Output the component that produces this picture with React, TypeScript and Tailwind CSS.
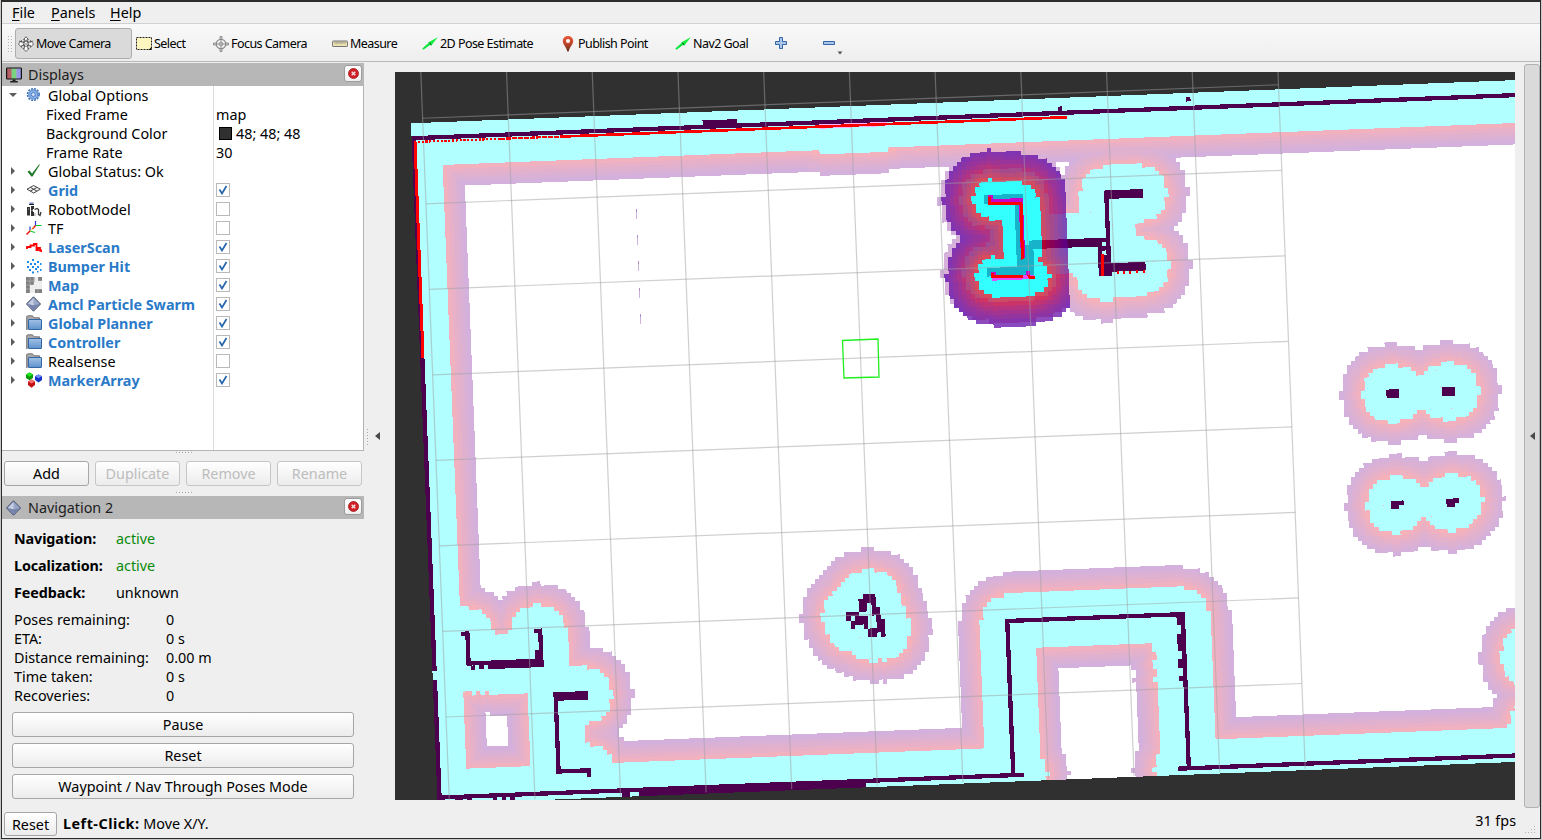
import React from "react";

/* ---------- occupancy map model ---------- */

const CELL = 4.285;
const COLS = 272;
const ROWS = 159;
const ORIGIN_X = 411;
const ORIGIN_Y = 123.3;
const ANGLE = -2.24;
const SIN = 0.03996;
const COS = 0.9992;

// [x, y, columns, rows]: centre of the first cell, then the extent in cells
type Block = [number, number, number, number];

const WALLS: Block[] = [
  [413, 138.4, 271, 1], [704, 122.6, 8, 1], [1059.5, 108, 1, 1], [1188, 99, 1, 1],
  [413, 138.4, 1, 125], [434.8, 684, 1, 28],
  [440, 796.5, 137, 1], [1180, 767.6, 98, 1],
  [457, 800, 2, 1], [470, 799.6, 1, 1], [495, 798.6, 1, 1], [504, 798.2, 1, 1], [512, 797.8, 1, 1],
  [623, 793, 2, 1], [641, 792.4, 53, 1],
  [463, 633, 2, 1], [468, 637, 1, 6], [468, 663.6, 18, 1], [490, 666.8, 12, 1], [473, 667.4, 1, 1], [482, 667, 1, 1],
  [536, 630.5, 2, 1], [540, 635, 1, 7], [536.5, 652, 1, 3], [542, 664.5, 1, 1],
  [555.5, 694.8, 8, 2], [556.4, 702, 1, 16], [558.8, 770.6, 8, 1], [588.6, 769.8, 1, 2],
  [864, 596.5, 3, 2], [860, 601, 2, 3], [848, 614, 3, 1], [848, 618, 1, 1], [852.5, 622, 1, 2], [857, 616, 3, 2],
  [865, 624.5, 1, 1], [873.5, 603.5, 1, 2], [873.5, 610, 2, 2], [877.5, 617, 1, 2], [878, 623, 2, 3], [883, 634, 1, 1], [870.5, 630, 2, 2],
  [1007, 620.5, 42, 1], [1007, 625, 1, 36], [1182.5, 617, 1, 36], [1178.5, 617, 1, 2], [1179, 635, 1, 4], [1180.6, 660, 1, 2], [1181, 678, 1, 1],
  [1388, 391.4, 3, 2], [1443, 389.4, 3, 2], [1392.4, 503, 3, 1], [1392.4, 507, 2, 1], [1448, 500.4, 3, 1], [1448, 504.8, 2, 1],
  [1527, 650, 3, 3], [1533, 724, 3, 10],
  [986, 197.5, 9, 2], [1016, 206, 2, 15], [1026, 247, 2, 7], [1030.5, 242, 3, 2], [989, 270, 11, 2],
  [1043, 242, 14, 2], [1106.5, 192, 9, 2], [1106.5, 200, 1, 10], [1103.5, 240, 1, 1], [1103.5, 248, 1, 1],
  [1103.8, 257, 1, 5], [1099, 249, 1, 7], [1107.6, 240, 1, 9], [1111.8, 265, 8, 2],
];

const SENSED: Block[] = [[821, 127, 16, 1]];

const LOCAL: Block[] = [
  [989, 198, 1, 2], [993, 202, 7, 1], [1020.5, 201, 1, 14], [992, 275, 1, 1], [992, 279, 9, 1], [1027, 273, 1, 2], [1030, 277.5, 2, 1],
];

function rasterize(blocks: Block[]): Uint8Array {
  const cells = new Uint8Array(COLS * ROWS);
  blocks.forEach(([x, y, w, h]) => {
    const dx = x - ORIGIN_X;
    const dy = y - 123.4;
    const c0 = Math.floor((dx * COS - dy * SIN) / CELL);
    const r0 = Math.floor((dx * SIN + dy * COS) / CELL);
    for (let r = Math.max(0, r0); r < Math.min(ROWS, r0 + h); r++)
      for (let c = Math.max(0, c0); c < Math.min(COLS, c0 + w); c++) cells[r * COLS + c] = 1;
  });
  return cells;
}

function distances(cells: Uint8Array): Float32Array {
  const out = new Float32Array(COLS * ROWS).fill(99);
  for (let r = 0; r < ROWS; r++)
    for (let c = 0; c < COLS; c++) {
      if (!cells[r * COLS + c]) continue;
      for (let y = -11; y <= 11; y++)
        for (let x = -11; x <= 11; x++) {
          const rr = r + y;
          const cc = c + x;
          if (rr < 0 || cc < 0 || rr >= ROWS || cc >= COLS) continue;
          const d = Math.sqrt(x * x + y * y);
          const i = rr * COLS + cc;
          if (d < out[i]) out[i] = d;
        }
    }
  return out;
}

function regionPath(inside: (i: number) => boolean, maxCol = COLS): string {
  let d = "";
  const n = (v: number) => (v * CELL).toFixed(2);
  for (let r = 0; r < ROWS; r++) {
    let start = -1;
    for (let c = 0; c <= maxCol; c++) {
      const on = c < maxCol && inside(r * COLS + c);
      if (on && start < 0) start = c;
      if (!on && start >= 0) {
        d += `M${n(start)} ${n(r)}H${n(c)}V${n(r + 1)}H${n(start)}Z`;
        start = -1;
      }
    }
  }
  return d;
}

function costColor(t: number, inscribed: number, decay: number): string {
  const c = Math.min(1, 0.98 * Math.exp(-decay * (t - inscribed)));
  return `rgb(${Math.round(255 * c)},0,${Math.round(255 * (1 - c))})`;
}

interface Layer { fill: string; d: string }

function costLayers(cells: Uint8Array, inscribed: number, decay: number, maxCol = COLS): Layer[] {
  const dist = distances(cells);
  const layers: Layer[] = [];
  for (let t = 11; t > inscribed; t -= 0.5)
    layers.push({ fill: costColor(t, inscribed, decay), d: regionPath((i) => dist[i] <= t, maxCol) });
  layers.push({ fill: "#00ffff", d: regionPath((i) => dist[i] <= inscribed, maxCol) });
  layers.push({ fill: "#ff00ff", d: regionPath((i) => dist[i] === 0, maxCol) });
  return layers;
}

const wallCells = rasterize(WALLS);
const wallPath = regionPath((i) => wallCells[i] === 1);
const globalLayers = costLayers(rasterize([...WALLS, ...SENSED]), 6, 0.16);
const localLayers = costLayers(rasterize(LOCAL), 4, 0.147, 152);

function Viewport() {
  const cols = Array.from({ length: 11 }, (_, i) => 11.8 + i * 85.65);
  const rows = Array.from({ length: 9 }, (_, i) => -4.6 + (i - 1) * 85.6);
  return (
    <svg className="block h-[728px] w-[1120px] bg-[#303030]" viewBox="395 72 1120 728">
      <g transform={`translate(${ORIGIN_X} ${ORIGIN_Y}) rotate(${ANGLE})`}>
        <g shapeRendering="crispEdges">
          <rect width={COLS * CELL} height={ROWS * CELL} fill="#fff" />
          <path d={wallPath} fill="#000" />
          <g opacity="0.3">
            {globalLayers.map((l, i) => <path key={i} d={l.d} fill={l.fill} />)}
          </g>
          <g opacity="0.7">
            {localLayers.map((l, i) => <path key={i} d={l.d} fill={l.fill} />)}
          </g>
        </g>
        <g stroke="#a0a0a4" strokeOpacity="0.5" strokeWidth="1.2">
          {cols.map((u) => <line key={u} x1={u} x2={u} y1={-90.2} y2={680.2} />)}
          {rows.map((v) => <line key={v} x1={cols[0]} x2={cols[10]} y1={v} y2={v} />)}
        </g>
      </g>
      <g stroke="#cdb2dd" strokeWidth="1" shapeRendering="crispEdges">
        <path d="M636.5 209v10M637.5 235v10M638.5 261v10M639.5 288v10M640.5 314v10" />
      </g>
      <path d="M636.5 209v3M637.5 235v3M638.5 261v3M639.5 288v3M640.5 314v3" stroke="#b08cc8" shapeRendering="crispEdges" />
      <g stroke="#f00" fill="none" shapeRendering="crispEdges">
        <path d="M414 142L500 138.8" strokeWidth="2.2" strokeDasharray="2.2 1.6" />
        <path d="M500 138.8L570 136.2" strokeWidth="2.2" strokeDasharray="5 1" />
        <path d="M560 136.6L1067 117.2" strokeWidth="2.7" />
        <path d="M415 142L423 358" strokeWidth="3" />
        <path d="M989.5 197v6.500H1021L1022.500 259.500" strokeWidth="3" />
        <path d="M992.500 272.500v4H1023M1028 275l2 2.500h5" strokeWidth="2.400" />
        <path d="M1102.500 254v22" strokeWidth="3" />
        <path d="M1117 272.500h2M1123 272h2M1129 272h2M1136 271.500h2M1142.500 271h2" strokeWidth="3" />
      </g>
      <path d="M842.500 340.500L878 339L879 377L844 378Z" fill="none" stroke="#1fee1f" strokeWidth="1.300" />
    </svg>
  );
}

/* ---------- icons ---------- */

type IconName =
  | "move" | "select" | "focus" | "measure" | "arrow" | "pin" | "plus" | "minus" | "monitor" | "gear" | "check"
  | "grid" | "robot" | "tf" | "laser" | "points" | "map" | "diamond" | "folder" | "markers";

const GREYS: [number, number][] = [[0, 0], [4, 0], [12, 0], [0, 4], [4, 4], [0, 8], [0, 12], [9, 12], [12, 12]];

function Glyph({ name }: { name: IconName }) {
  switch (name) {
    case "move":
      return (
        <g fill="#fff" stroke="#444" strokeWidth=".8">
          <path d="M8 .7l2.500 3H9v2.600L12.500 6V4.500L15.500 8l-3 3.400V9.600L9.700 9v3.400h1.500L8 15.400l-3.200-3h1.600V9L3.500 9.600v1.800L.5 8l3-3.500V6L7 6.300V3.700H5.500z" />
          <circle cx="8" cy="7.600" r="2.800" fill="none" />
          <path d="M1 5l3 1M15 5l-3 1M6 8h4" />
        </g>
      );
    case "select":
      return (
        <g>
          <rect x=".5" y="1.500" width="15" height="12" fill="#fff6bf" stroke="#222" strokeDasharray="2 1" />
          <path d="M15.500 11v3H12.500z" fill="#000" />
        </g>
      );
    case "focus":
      return (
        <g fill="none" stroke="#888">
          <circle cx="8" cy="8" r="4.700" strokeWidth="1.300" />
          <circle cx="8" cy="8" r="2" strokeWidth=".8" />
          <path d="M8 3v10M3 8h10" strokeWidth=".8" />
          <path d="M7 3V.5h2V3M7 13v2.500h2V13M3 7H.5v2H3M13 7h2.500v2H13" strokeWidth=".9" fill="#ccc" />
        </g>
      );
    case "measure":
      return (
        <g>
          <rect x=".5" y="5" width="15" height="5.500" rx=".6" fill="#eadfae" stroke="#777" />
          <path d="M3 5.500v2M5 5.500v2.500M7 5.500v2M9 5.500v2.500M11 5.500v2M13 5.500v2" stroke="#777" strokeWidth=".8" />
        </g>
      );
    case "arrow":
      return (
        <g>
          <path d="M.3 12.500L6.500 7l1.800 1.800L1.500 13.800z" fill="#0be63a" />
          <path d="M6 6.500L15.800 1.200 9.300 9.500z" fill="#10f03c" />
          <path d="M7 6.500l1.200 2.500 1.300.5-1-2.500z" fill="#086b1c" />
        </g>
      );
    case "pin":
      return (
        <g>
          <path d="M8 0c3 0 5.200 2.200 5.200 5.200 0 3.300-3.500 5.300-4.500 10.300H7.300C6.300 10.500 2.800 8.500 2.800 5.200 2.800 2.200 5 0 8 0z" fill="url(#pinFill)" />
          <circle cx="8" cy="5" r="2" fill="#fff" />
        </g>
      );
    case "plus":
      return <path d="M6.500 2.500h3v4h4v3h-4v4h-3v-4h-4v-3h4z" fill="#a9c6ea" stroke="#3465a4" />;
    case "minus":
      return <path d="M2.500 6.500h11v3h-11z" fill="#a9c6ea" stroke="#3465a4" />;
    case "monitor":
      return (
        <g>
          <path d="M1 1.500h4.700v10.500H1z" fill="#b65f64" />
          <path d="M5.700 1.500h4.800v10.500H5.700z" fill="#7bd37f" />
          <path d="M10.500 1.500h4.700v10.500h-4.700z" fill="#9a97e6" />
          <rect x=".6" y="1" width="14.800" height="11" rx=".8" fill="none" stroke="#111" strokeWidth="1.200" />
          <path d="M6.500 12.500h3v1.500h2.300v1.500H4.200V14h2.300z" fill="#222" />
        </g>
      );
    case "gear":
      return (
        <g fill="none" stroke="#4a7fc6">
          <circle cx="7.300" cy="7.500" r="5.800" stroke="#3d72b8" strokeWidth="1.600" strokeDasharray="2 1.040" />
          <circle cx="7.300" cy="7.500" r="4.600" fill="#8ab1e4" strokeWidth="1" />
          <circle cx="7.300" cy="7.500" r="2" fill="#d4e2f6" strokeWidth="1" />
        </g>
      );
    case "check":
      return <path d="M1.500 8.500l2-1L6 10.500 13 1.500h1L6.500 13.500H5.300z" fill="#1e7a2a" />;
    case "grid":
      return (
        <path d="M1 7.200L7.700 3.500l6.600 3.700L7.700 11zM4.300 5.400l6.700 3.700M11 5.400L4.300 9.100" fill="#f6f6f6" stroke="#444" strokeWidth="1" />
      );
    case "robot":
      return (
        <g>
          <path d="M3.500 1.500h4v2h-4z" fill="#6a7fc0" />
          <path d="M3 3h5v1H3z" fill="#222" />
          <path d="M1 6h3v8.500H1zM5 5h3v3H7v3h1v4H5z" fill="#333" />
          <path d="M8.500 8.500l2.500-1 1.500 1v5l1.500 1 1-3.500" fill="none" stroke="#333" strokeWidth="1.300" />
          <path d="M2 8h1M5.500 9.500h1.500M9 12v3" stroke="#999" />
        </g>
      );
    case "tf":
      return (
        <g fill="none" strokeWidth="1.200">
          <path d="M9.500 5.500V1M4 11V6.500" stroke="#2233e6" />
          <path d="M9.500 5.500H15.500M4 11l5 1.500" stroke="#0c2" />
          <path d="M9.500 5.500L6.500 9M4 11L.5 14.500" stroke="#e11" strokeWidth="1.500" />
          <path d="M4 11L8 7" stroke="#dd2" strokeDasharray="1 1" />
        </g>
      );
    case "laser":
      return <path d="M1 10V8h3.500V6.500H8V5h2.500v6H12V9h2v2.500h1.500V13" fill="none" stroke="#f00" strokeWidth="1.800" />;
    case "points":
      return (
        <path
          d="M6 1h2v2H6zM1 3h2v2H1zM11 3h2v2h-2zM4 5h2v2H4zM8 5h2v2H8zM14 5h1.500v2H14zM1 8h2v2H1zM6 8h2v2H6zM11 8h2v2h-2zM3 11h2v2H3zM9 10h2v2H9zM14 11h1.500v2H14zM6 13.500h2v2H6zM11 13h1.500v1.500H11z"
          fill="#1a8cf0"
        />
      );
    case "map":
      return (
        <g>
          <path d="M0 0h16v16H0z" fill="#ececec" />
          {GREYS.map(([x, y]) => <path key={`${x}-${y}`} d={`M${x} ${y}h4v4h-4z`} fill="#808080" />)}
          <path d="M4 0h4.500v5H4z" fill="#808080" />
          <path d="M4 0v16M8 0v16M12 0v16M0 4h16M0 8h16M0 12h16" stroke="#fff" strokeOpacity=".45" strokeWidth=".6" />
        </g>
      );
    case "diamond":
      return (
        <g>
          <path d="M7.500.8l7 7.200-7 7.200L.5 8z" fill="#9aa7c8" stroke="#3c4768" strokeWidth="1" />
          <path d="M7.500 2l-5.500 6 5.500 1.500z" fill="#c6cee2" />
          <path d="M7.500 9.500L13.500 8l-6 6.200L2 8z" fill="#7583ad" />
        </g>
      );
    case "folder":
      return (
        <g>
          <path d="M.6 15V1.500L2 .8h4.500l1.500 2h5.500v3" fill="#a9a9a9" stroke="#6b6b6b" strokeWidth=".9" />
          <path d="M.6 2v12.500h2V4z" fill="#999" />
          <rect x="2.500" y="4.500" width="13" height="10" rx=".5" fill="url(#folderFill)" stroke="#3465a4" strokeWidth="1" />
        </g>
      );
    default:
      return (
        <g>
          <path d="M0 2.500L3.500.500 7 2.500V6L3.500 8.200 0 6z" fill="#0a9a0a" /><path d="M0 2.500L3.500.500 7 2.500 3.500 4.500z" fill="#1fe81f" />
          <path d="M9 4.200l3.500-1.700L16 4.200V8l-3.500 2.500L9 8z" fill="#1532c4" /><path d="M9 4.200l3.500-1.700L16 4.200l-3.500 2z" fill="#6f8df5" />
          <path d="M2 9.500l3.500-2 3.500 2V13l-3.500 2.700L2 13z" fill="#c40f14" /><path d="M2 9.500l3.500-2 3.500 2-3.500 2z" fill="#f57272" />
        </g>
      );
  }
}

function Icon({ name }: { name: IconName }) {
  return (
    <svg className="block h-4 w-4 shrink-0" viewBox="0 0 16 16">
      <defs>
        <linearGradient id="pinFill" x1="0" y1="0" x2="0" y2="1">
          <stop offset="0" stopColor="#e8583a" /><stop offset=".5" stopColor="#c0452a" /><stop offset="1" stopColor="#5a2d1a" />
        </linearGradient>
        <linearGradient id="folderFill" x1="0" y1="0" x2="0" y2="1">
          <stop offset="0" stopColor="#a3c2e6" /><stop offset="1" stopColor="#5f93cd" />
        </linearGradient>
      </defs>
      <Glyph name={name} />
    </svg>
  );
}

/* ---------- chrome ---------- */

const MENUS = [
  { key: "F", rest: "ile", cls: "w-[39px]" },
  { key: "P", rest: "anels", cls: "w-[59px]" },
  { key: "H", rest: "elp", cls: "w-[40px]" },
];

const TOOLS: { icon: IconName; label: string; cls: string }[] = [
  { icon: "select", label: "Select", cls: "w-[77px]" },
  { icon: "focus", label: "Focus Camera", cls: "w-[119px]" },
  { icon: "measure", label: "Measure", cls: "w-[90px]" },
  { icon: "arrow", label: "2D Pose Estimate", cls: "w-[138px]" },
  { icon: "pin", label: "Publish Point", cls: "w-[115px]" },
  { icon: "arrow", label: "Nav2 Goal", cls: "w-[98px]" },
];

function Toolbar() {
  return (
    <div className="flex h-[38px] shrink-0 items-center border-b border-[#b8b8b8] bg-linear-to-b from-[#f9f9f9] to-[#eeeeee] pt-0.5 text-[12.5px] leading-none tracking-[-0.55px]">
      <div className="ml-[5px] mr-[3px] h-[17px] w-[5px] bg-[radial-gradient(#b5b5b5_0.8px,transparent_0.9px)] bg-[size:3px_3px]" />
      <div className="mr-1 flex h-[31px] w-[117px] items-center gap-0.5 rounded-[3px] border border-[#adadad] bg-[#dadada] pl-0.5">
        <Icon name="move" />
        <span className="pt-0.5">Move Camera</span>
      </div>
      {TOOLS.map((t) => (
        <div key={t.label} className={`flex shrink-0 items-center gap-0.5 ${t.cls}`}>
          <Icon name={t.icon} />
          <span className="whitespace-nowrap pt-0.5">{t.label}</span>
        </div>
      ))}
      <div className="mb-px w-12"><Icon name="plus" /></div>
      <div className="mb-px flex items-end">
        <Icon name="minus" />
        <svg className="-mb-1 h-1 w-1.5" viewBox="0 0 6 4"><path d="M.5 .5h5L3 3.500z" fill="#555" /></svg>
      </div>
    </div>
  );
}

function PanelTitle({ icon, title }: { icon: IconName; title: string }) {
  return (
    <div className="flex h-[23px] shrink-0 items-center bg-[#b7b7b7] pl-1 pr-0.5">
      <Icon name={icon} />
      <span className="ml-1.5 grow text-[#1c1c1c]">{title}</span>
      <div className="mb-[3px] flex h-[17px] w-[18px] items-center justify-center rounded-[3px] border border-[#9c9c9c] bg-linear-to-b from-white to-[#efefef]">
        <svg className="h-[11px] w-[11px]" viewBox="0 0 11 11">
          <circle cx="5.500" cy="5.500" r="5" fill="#cf1f26" stroke="#a5151b" strokeWidth=".8" />
          <path d="M3.700 3.700l3.600 3.600M7.300 3.700L3.700 7.300" stroke="#f6dcdc" strokeWidth="1.500" />
        </svg>
      </div>
    </div>
  );
}

interface Row { label: string; icon?: IconName; open?: boolean; checked?: boolean; value?: string; swatch?: boolean; on?: boolean }

const ROWS_DATA: Row[] = [
  { label: "Global Options", icon: "gear", open: true },
  { label: "Fixed Frame", value: "map" },
  { label: "Background Color", value: "48; 48; 48", swatch: true },
  { label: "Frame Rate", value: "30" },
  { label: "Global Status: Ok", icon: "check" },
  { label: "Grid", icon: "grid", checked: true, on: true },
  { label: "RobotModel", icon: "robot", checked: false },
  { label: "TF", icon: "tf", checked: false },
  { label: "LaserScan", icon: "laser", checked: true, on: true },
  { label: "Bumper Hit", icon: "points", checked: true, on: true },
  { label: "Map", icon: "map", checked: true, on: true },
  { label: "Amcl Particle Swarm", icon: "diamond", checked: true, on: true },
  { label: "Global Planner", icon: "folder", checked: true, on: true },
  { label: "Controller", icon: "folder", checked: true, on: true },
  { label: "Realsense", icon: "folder", checked: false },
  { label: "MarkerArray", icon: "markers", checked: true, on: true },
];

function CheckBox({ checked }: { checked: boolean }) {
  return (
    <span className="mb-0.5 flex h-3.5 w-3.5 items-center justify-center border border-[#b9b9b9] bg-white">
      {checked && (
        <svg className="h-2.5 w-2.5" viewBox="0 0 10 10"><path d="M1.500 4.500l2.500 4L8.500 1" fill="none" stroke="#2565ab" strokeWidth="1.700" /></svg>
      )}
    </span>
  );
}

function TreeRow({ row }: { row: Row }) {
  return (
    <div className="flex h-[19px] items-center">
      <div className="flex h-[19px] w-[212px] shrink-0 items-center border-r border-[#dcdcdc]">
        {row.icon ? (
          <>
            <svg className="mb-px ml-[7px] mr-3.5 h-2 w-2 shrink-0" viewBox="0 0 8 8">
              <path d={row.open ? "M0 2h8L4 6z" : "M2 0v8l4-4z"} fill="#5c5c5c" />
            </svg>
            <span className="-ml-[5px] mb-0.5"><Icon name={row.icon} /></span>
            <span className={row.on ? "ml-1.5 whitespace-nowrap font-bold text-[#2a7ac8]" : "ml-1.5 whitespace-nowrap"}>{row.label}</span>
          </>
        ) : (
          <span className="ml-11">{row.label}</span>
        )}
      </div>
      <div className="flex items-center pl-0.5">
        {row.swatch && <span className="ml-[3px] mr-1 h-[13px] w-[13px] border border-black bg-[#303030]" />}
        {row.value}
        {row.checked !== undefined && <CheckBox checked={row.checked} />}
      </div>
    </div>
  );
}

function Button({ label, disabled, cls }: { label: string; disabled?: boolean; cls: string }) {
  return (
    <button
      className={`flex shrink-0 items-center justify-center rounded-[3px] border bg-linear-to-b from-white to-[#ececec] ${disabled ? "border-[#c6c6c6] text-[#bdbdbd]" : "border-[#a6a6a6]"} ${cls}`}
    >
      {label}
    </button>
  );
}

function HandleDots() {
  return <div className="h-[3px] w-[17px] bg-[radial-gradient(#a8a8a8_0.8px,transparent_0.9px)] bg-[size:3px_3px]" />;
}

const STATES = [
  { label: "Navigation:", value: "active", cls: "text-[#0a8a0a]" },
  { label: "Localization:", value: "active", cls: "text-[#0a8a0a]" },
  { label: "Feedback:", value: "unknown", cls: "" },
];

const STATS = [
  ["Poses remaining:", "0"], ["ETA:", "0 s"], ["Distance remaining:", "0.00 m"], ["Time taken:", "0 s"], ["Recoveries:", "0"],
];

function LeftDock() {
  return (
    <div className="flex w-[362px] shrink-0 flex-col pt-px">
      <PanelTitle icon="monitor" title="Displays" />
      <div className="flex h-[365px] shrink-0 flex-col border-b border-r border-[#b4b4b4] bg-white">
        {ROWS_DATA.map((r) => <TreeRow key={r.label} row={r} />)}
        <div className="w-[212px] grow border-r border-[#dcdcdc]" />
      </div>
      <div className="flex h-[10px] shrink-0 justify-center"><HandleDots /></div>
      <div className="flex shrink-0 gap-1.5 pl-0.5">
        <Button label="Add" cls="h-[25px] w-[85px]" />
        <Button label="Duplicate" disabled cls="h-[25px] w-[85px]" />
        <Button label="Remove" disabled cls="h-[25px] w-[85px]" />
        <Button label="Rename" disabled cls="h-[25px] w-[85px]" />
      </div>
      <div className="flex h-[10px] shrink-0 items-end justify-center pb-0.5"><HandleDots /></div>
      <PanelTitle icon="diamond" title="Navigation 2" />
      <div className="flex flex-col pl-3 pt-1.5">
        {STATES.map((s) => (
          <div key={s.label} className="flex h-[27px] items-center">
            <span className="w-[102px] font-bold tracking-[-0.1px]">{s.label}</span>
            <span className={s.cls}>{s.value}</span>
          </div>
        ))}
        <div className="mt-1 flex flex-col">
          {STATS.map(([k, v]) => (
            <div key={k} className="flex h-[19px] items-center">
              <span className="w-[152px]">{k}</span>
              <span>{v}</span>
            </div>
          ))}
        </div>
      </div>
      <div className="mt-[7px] flex flex-col gap-1.5 pl-2.5">
        <Button label="Pause" cls="h-[25px] w-[342px]" />
        <Button label="Reset" cls="h-[25px] w-[342px]" />
        <Button label="Waypoint / Nav Through Poses Mode" cls="h-[25px] w-[342px]" />
      </div>
    </div>
  );
}

function CollapseArrow() {
  return <svg className="h-2 w-[5px]" viewBox="0 0 5 8"><path d="M5 0v8L0 4z" fill="#4a4a4a" /></svg>;
}

export default function App() {
  return (
    <div className="h-[840px] w-[1542px] overflow-hidden border-l border-r border-[#c9c9c9] bg-[#c9c9c9] pb-px font-['Noto_Sans',sans-serif] text-[14.35px] leading-[15px] text-black">
      <div className="flex h-[839px] flex-col border border-t-2 border-[#2b2b2b] bg-[#efefef]">
        <div className="flex h-[22px] shrink-0 items-center border-b border-[#d2d2d2] pl-2.5">
          {MENUS.map((m) => (
            <span key={m.key} className={m.cls}>
              <span className="underline underline-offset-2">{m.key}</span>{m.rest}
            </span>
          ))}
        </div>
        <Toolbar />
        <div className="flex h-[746px] shrink-0">
          <LeftDock />
          <div className="flex w-[31px] shrink-0 items-center gap-[6px] pl-0.5 pt-0.5">
            <div className="h-[17px] w-[3px] bg-[radial-gradient(#a8a8a8_0.8px,transparent_0.9px)] bg-[size:3px_3px]" />
            <CollapseArrow />
          </div>
          <div className="pt-2.5"><Viewport /></div>
          <div className="ml-[9px] mt-0.5 flex w-4 items-center justify-center rounded-[3px] border border-[#b2b2b2] bg-[#dadada]">
            <CollapseArrow />
          </div>
        </div>
        <div className="flex grow items-center pl-0.5">
          <Button label="Reset" cls="mt-0.5 h-6 w-[53px]" />
          <span className="ml-1.5 grow"><b className="tracking-[0.5px]">Left-Click:</b> Move X/Y.</span>
          <span className="mb-1.5 mr-2">31 fps</span>
          <div className="mr-1 mt-3 h-2 w-3 bg-[radial-gradient(#b0b0b0_0.8px,transparent_0.9px)] bg-[size:3px_3px] [clip-path:polygon(100%_0,100%_100%,0_100%)]" />
        </div>
      </div>
    </div>
  );
}
